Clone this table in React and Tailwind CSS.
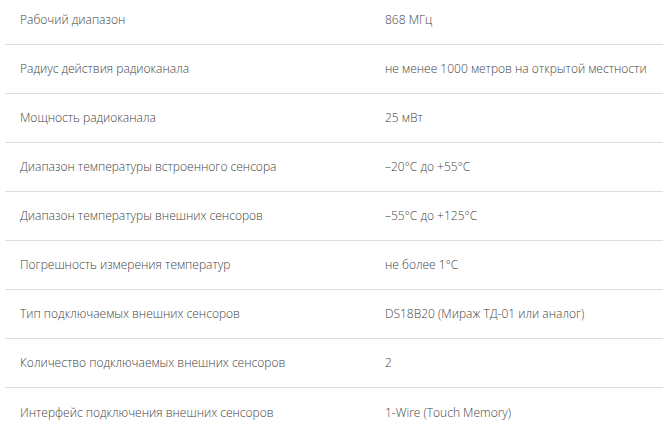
import React from 'react'

const rows = [
  ['Рабочий диапазон', '868 МГц'],
  ['Радиус действия радиоканала', 'не менее 1000 метров на открытой местности'],
  ['Мощность радиоканала', '25 мВт'],
  ['Диапазон температуры встроенного сенсора', '–20°C до +55°C'],
  ['Диапазон температуры внешних сенсоров', '–55°C до +125°C'],
  ['Погрешность измерения температур', 'не более 1°C'],
  ['Тип подключаемых внешних сенсоров', 'DS18B20 (Мираж ТД-01 или аналог)'],
  ['Количество подключаемых внешних сенсоров', '2'],
  ['Интерфейс подключения внешних сенсоров', '1-Wire (Touch Memory)'],
]

export default function App() {
  return (
    <div className="w-[663px] h-[433px] overflow-hidden bg-white pl-[5px]" style={{ fontFamily: '"Open Sans", sans-serif' }}>
      <div className="-mt-[4px]">
        {rows.map(([k, v], i) => (
          <div key={i} className={`grid grid-cols-[380px_1fr] h-[49px] items-center text-[12px] font-light text-[#444] ${i < rows.length - 1 ? 'border-b border-[#dddddd]' : ''}`}>
            <div className="pl-[15px] whitespace-nowrap">{k}</div>
            <div className="whitespace-nowrap">{v}</div>
          </div>
        ))}
      </div>
    </div>
  )
}
